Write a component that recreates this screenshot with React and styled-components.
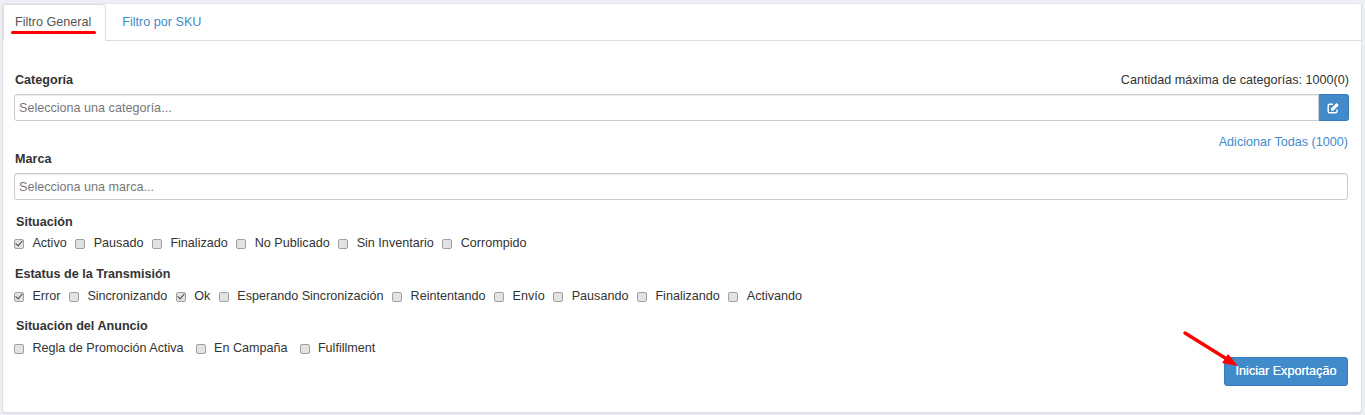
import React from "react";
import styled, { createGlobalStyle } from "styled-components";

const Global = createGlobalStyle`
  html, body { margin: 0; padding: 0; background: #ecf0f5; }
  body { font-family: "Liberation Sans", Arial, sans-serif; font-size: 12.6px; color: #333; }
  * { box-sizing: border-box; }
`;

const Page = styled.div`
  position: relative;
  width: 1365px;
  height: 415px;
  padding: 3px 3px 2px 2px;
  overflow: hidden;
`;

const Panel = styled.div`
  height: 410px;
  background: #fff;
  border: 1px solid #e0e0e0;
  border-top-color: #e6e6e6;
  border-radius: 3px;
  box-shadow: 0 1px 1px rgba(0, 0, 0, 0.06);
`;

const Tabs = styled.ul`
  display: flex;
  list-style: none;
  margin: 0;
  padding: 0;
  height: 37px;
  border-bottom: 1px solid #ddd;
`;

const Tab = styled.li`
  height: 37px;
  padding: 9px ${(p) => (p.$active ? "14px" : "16px")} 0 ${(p) => (p.$active ? "11px" : "15px")};
  line-height: 16px;
  color: ${(p) => (p.$active ? "#555" : "#428bca")};
  background: ${(p) => (p.$active ? "#fff" : "transparent")};
  border: 1px solid ${(p) => (p.$active ? "#ddd" : "transparent")};
  border-bottom-color: ${(p) => (p.$active ? "#fff" : "transparent")};
  border-radius: 4px 4px 0 0;
`;

const Body = styled.div`
  padding: 31px 12px 0 11px;
  display: flex;
  flex-direction: column;
`;

const LabelRow = styled.div`
  display: flex;
  justify-content: space-between;
  height: 17px;
  line-height: 17px;
  margin-bottom: ${(p) => p.$gap || 0}px;
`;

const Title = styled.span`
  font-weight: 700;
  color: #333;
  padding-left: ${(p) => p.$inset || 0}px;
`;

const Plain = styled.span`
  color: #333;
`;

const InputGroup = styled.div`
  display: flex;
  height: 27px;
`;

const TextInput = styled.input`
  flex: 1;
  min-width: 0;
  height: 27px;
  padding: 0 4px;
  font: 12.6px "Liberation Sans", Arial, sans-serif;
  color: #333;
  background: #fff;
  border: 1px solid #ccc;
  border-radius: ${(p) => (p.$joined ? "3px 0 0 3px" : "3px")};
  box-shadow: inset 0 1px 1px rgba(0, 0, 0, 0.075);
  outline: none;
  margin-right: ${(p) => (p.$joined ? 0 : 1)}px;
  &::placeholder { color: #777; opacity: 1; }
`;

const IconButton = styled.button`
  width: 30px;
  height: 27px;
  padding: 0;
  display: flex;
  align-items: center;
  justify-content: center;
  color: #fff;
  background: #428bca;
  border: 1px solid #357ebd;
  border-left: 0;
  border-radius: 0 3px 3px 0;
`;

const LinkRow = styled.div`
  display: flex;
  justify-content: flex-end;
  height: 17px;
  line-height: 17px;
  margin-top: 13px;
  padding-right: 1px;
  color: #428bca;
`;

const Group = styled.div`
  margin-top: ${(p) => p.$top}px;
`;

const Checks = styled.div`
  display: flex;
  align-items: center;
  height: 17px;
  line-height: 17px;
  margin-top: ${(p) => p.$top}px;
`;

const CheckLabel = styled.label`
  display: flex;
  align-items: center;
  margin-right: ${(p) => p.$gap}px;
  color: #333;
`;

const Box = styled.input.attrs({ type: "checkbox", readOnly: true })`
  appearance: none;
  position: relative;
  width: 10px;
  height: 10px;
  margin: 0 8.4px 0 0;
  background: #e2e2e2;
  border: 1px solid #a0a0a0;
  border-radius: 2px;
  &:checked::after {
    content: "";
    position: absolute;
    left: 2.2px;
    top: -0.4px;
    width: 3.2px;
    height: 6px;
    border: solid #444;
    border-width: 0 1.6px 1.6px 0;
    transform: rotate(40deg);
  }
`;

const Footer = styled.div`
  display: flex;
  justify-content: flex-end;
  padding-right: 1px;
`;

const Primary = styled.button`
  width: 124px;
  height: 29px;
  padding: 0 0 1px;
  font: 12.6px "Liberation Sans", Arial, sans-serif;
  text-shadow: 0 0 0.5px #fff;
  color: #fff;
  background: #428bca;
  border: 1px solid #357ebd;
  border-radius: 3px;
`;

const Underline = styled.div`
  position: absolute;
  left: 11px;
  top: 31px;
  width: 85px;
  height: 3px;
  background: #f00;
  border-radius: 2px;
`;

const Arrow = styled.svg`
  position: absolute;
  left: 1180px;
  top: 328px;
  pointer-events: none;
`;

const statuses = [
  { title: "Situación", inset: 2, top: 14, rowTop: 4, gap: 8.6, items: [["Activo", 1], ["Pausado"], ["Finalizado"], ["No Publicado"], ["Sin Inventario"], ["Corrompido"]] },
  { title: "Estatus de la Transmisión", inset: 1, top: 14, rowTop: 5, gap: 8.6, items: [["Error", 1], ["Sincronizando"], ["Ok", 1], ["Esperando Sincronización"], ["Reintentando"], ["Envío"], ["Pausando"], ["Finalizando"], ["Activando"]] },
  { title: "Situación del Anuncio", inset: 2, top: 13, rowTop: 5, gap: 12, items: [["Regla de Promoción Activa"], ["En Campaña"], ["Fulfillment"]] },
];

const EditIcon = () => (
  <svg width="13" height="12" viewBox="0 0 13 12" aria-hidden="true">
    <path d="M6 2.2H2.6A1.4 1.4 0 0 0 1.2 3.6v5.8a1.4 1.4 0 0 0 1.4 1.4h6a1.4 1.4 0 0 0 1.4-1.4V7.4" fill="none" stroke="#fff" strokeWidth="1.4" />
    <path d="M4 6.6 9.6 1l2.2 2.2-5.6 5.6H4z" fill="#fff" />
  </svg>
);

export default function App() {
  return (
    <Page>
      <Global />
      <Panel>
        <Tabs>
          <Tab $active>Filtro General</Tab>
          <Tab>Filtro por SKU</Tab>
        </Tabs>
        <Body>
          <LabelRow $gap={5}>
            <Title $inset={1}>Categoría</Title>
            <Plain>Cantidad máxima de categorías: 1000(0)</Plain>
          </LabelRow>
          <InputGroup>
            <TextInput $joined placeholder="Selecciona una categoría..." />
            <IconButton aria-label="Editar"><EditIcon /></IconButton>
          </InputGroup>
          <LinkRow>Adicionar Todas (1000)</LinkRow>
          <LabelRow $gap={5}>
            <Title $inset={1}>Marca</Title>
          </LabelRow>
          <InputGroup>
            <TextInput placeholder="Selecciona una marca..." />
          </InputGroup>
          {statuses.map((g) => (
            <Group key={g.title} $top={g.top}>
              <LabelRow>
                <Title $inset={g.inset}>{g.title}</Title>
              </LabelRow>
              <Checks $top={g.rowTop}>
                {g.items.map(([name, on]) => (
                  <CheckLabel key={name} $gap={g.gap}>
                    <Box defaultChecked={!!on} />
                    {name}
                  </CheckLabel>
                ))}
              </Checks>
            </Group>
          ))}
          <Footer>
            <Primary>Iniciar Exportação</Primary>
          </Footer>
        </Body>
      </Panel>
      <Underline />
      <Arrow width="60" height="50" viewBox="0 0 60 50">
        <line x1="5" y1="5" x2="50" y2="33" stroke="#f00" strokeWidth="3.4" strokeLinecap="round" />
        <polygon points="58,38 48,26 42,35" fill="#f00" />
      </Arrow>
    </Page>
  );
}
